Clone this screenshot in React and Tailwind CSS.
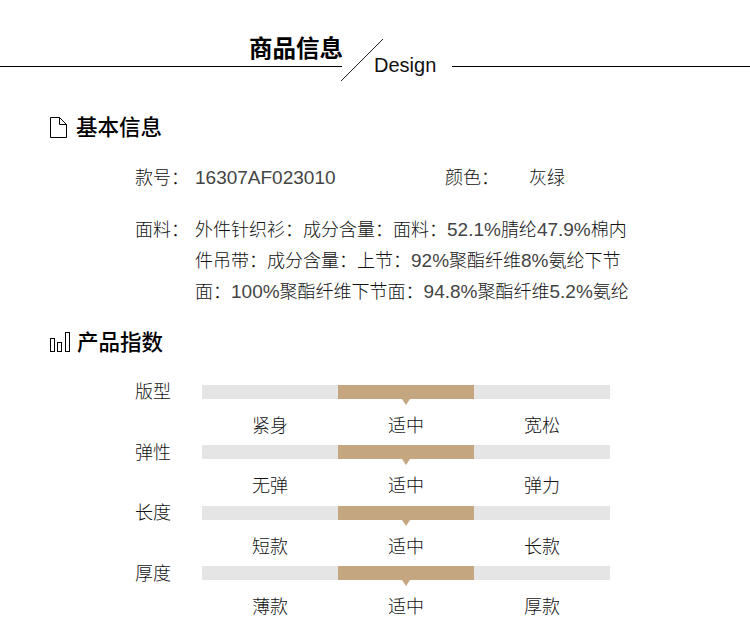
const sans = 'font-["Inter","Noto_Sans_CJK_SC",sans-serif]';

function SectionTitle({ icon, children, gap }) {
  return (
    <div className={`flex items-center ${gap}`}>
      {icon}
      <h2 className="text-[21.5px] leading-[30px] font-medium text-black">{children}</h2>
    </div>
  );
}

function Num({ children }) {
  return <span className="font-['Liberation_Sans'] text-[19px] font-normal text-[#444]">{children}</span>;
}

const FileIcon = (
  <svg width="17" height="21" viewBox="0 0 17 21" fill="none" stroke="#000" strokeWidth="1">
    <path d="M0.5 0.5H9.5L16.5 7.5V20.5H0.5Z" />
    <path d="M9.5 0.5V7.5H16.5" />
  </svg>
);

const BarsIcon = (
  <svg width="20" height="20" viewBox="0 0 20 20" fill="none" stroke="#000" strokeWidth="1">
    <rect x="0.5" y="6.5" width="4" height="13" />
    <rect x="7.5" y="10.5" width="4" height="9" />
    <rect x="15.5" y="0.5" width="4" height="19" />
  </svg>
);

const rows = [
  ["版型", "紧身", "适中", "宽松"],
  ["弹性", "无弹", "适中", "弹力"],
  ["长度", "短款", "适中", "长款"],
  ["厚度", "薄款", "适中", "厚款"],
];

function Row({ data }) {
  const [name, a, b, c] = data;
  return (
    <div className="flex h-[60.5px]">
      <div className="w-[66px] -ml-px pt-[0.2px] text-[18px] leading-[14px] text-[#111] mr-px">{name}</div>
      <div className="w-[408px]">
        <div className="grid grid-cols-3 h-[14px] bg-[#e5e5e5]">
          <div />
          <div className="relative bg-[#c4a680]">
            <div className="absolute left-1/2 top-full -translate-x-1/2 w-0 h-0 border-x-[4.5px] border-x-transparent border-t-[6px] border-t-[#c4a680]" />
          </div>
          <div />
        </div>
        <div className="grid grid-cols-3 mt-[14px] text-[18px] leading-[26px] text-center text-[#111]">
          <span>{a}</span>
          <span>{b}</span>
          <span>{c}</span>
        </div>
      </div>
    </div>
  );
}

export default function App() {
  return (
    <div className={`${sans} w-[750px] h-[620px] overflow-hidden bg-white font-light`}>
      <header className="flex items-end h-[82px]">
        <div className="w-[342px] h-[35px] mb-[15px] border-b border-black flex justify-end">
          <h1 className="text-[23.5px] leading-[32px] font-bold text-black mt-[1px] -mr-[1px]">商品信息</h1>
        </div>
        <svg width="44" height="44" viewBox="0 0 44 44" className="-ml-[2px] shrink-0" fill="none" stroke="#222" strokeWidth="1">
          <path d="M1 43L43 1" />
        </svg>
        <span className="-ml-[10px] w-[62px] text-[20px] leading-[28px] text-[#111] font-normal font-['Liberation_Sans'] mb-[3px]">Design</span>
        <div className="flex-1 ml-[16px] h-px bg-black mb-[15px]" />
      </header>

      <section className="pl-[50px] mt-[30px]">
        <SectionTitle icon={FileIcon} gap="gap-[9px]">基本信息</SectionTitle>
      </section>

      <section className="pl-[136px] mt-[21px] text-[18px] text-[#111]">
        <div className="flex h-[30px] leading-[30px]">
          <span className="w-[59px] -ml-px mr-px">款号：</span>
          <span className="w-[250px]"><Num>16307AF023010</Num></span>
          <span className="w-[84px]">颜色：</span>
          <span>灰绿</span>
        </div>
        <div className="flex mt-[21px] leading-[31px]">
          <span className="w-[59px] shrink-0 -ml-px mr-px">面料：</span>
          <p className="w-[450px]">
            外件针织衫：成分含量：面料：<Num>52.1%</Num>腈纶<Num>47.9%</Num>棉内
            <br />
            件吊带：成分含量：上节：<Num>92%</Num>聚酯纤维<Num>8%</Num>氨纶下节
            <br />
            面：<Num>100%</Num>聚酯纤维下节面：<Num>94.8%</Num>聚酯纤维<Num>5.2%</Num>氨纶
          </p>
        </div>
      </section>

      <section className="pl-[50px] mt-[20px]">
        <SectionTitle icon={BarsIcon} gap="gap-[7px]">产品指数</SectionTitle>
      </section>

      <section className="pl-[136px] mt-[27.9px]">
        {rows.map((r) => (
          <Row key={r[0]} data={r} />
        ))}
      </section>
    </div>
  );
}
